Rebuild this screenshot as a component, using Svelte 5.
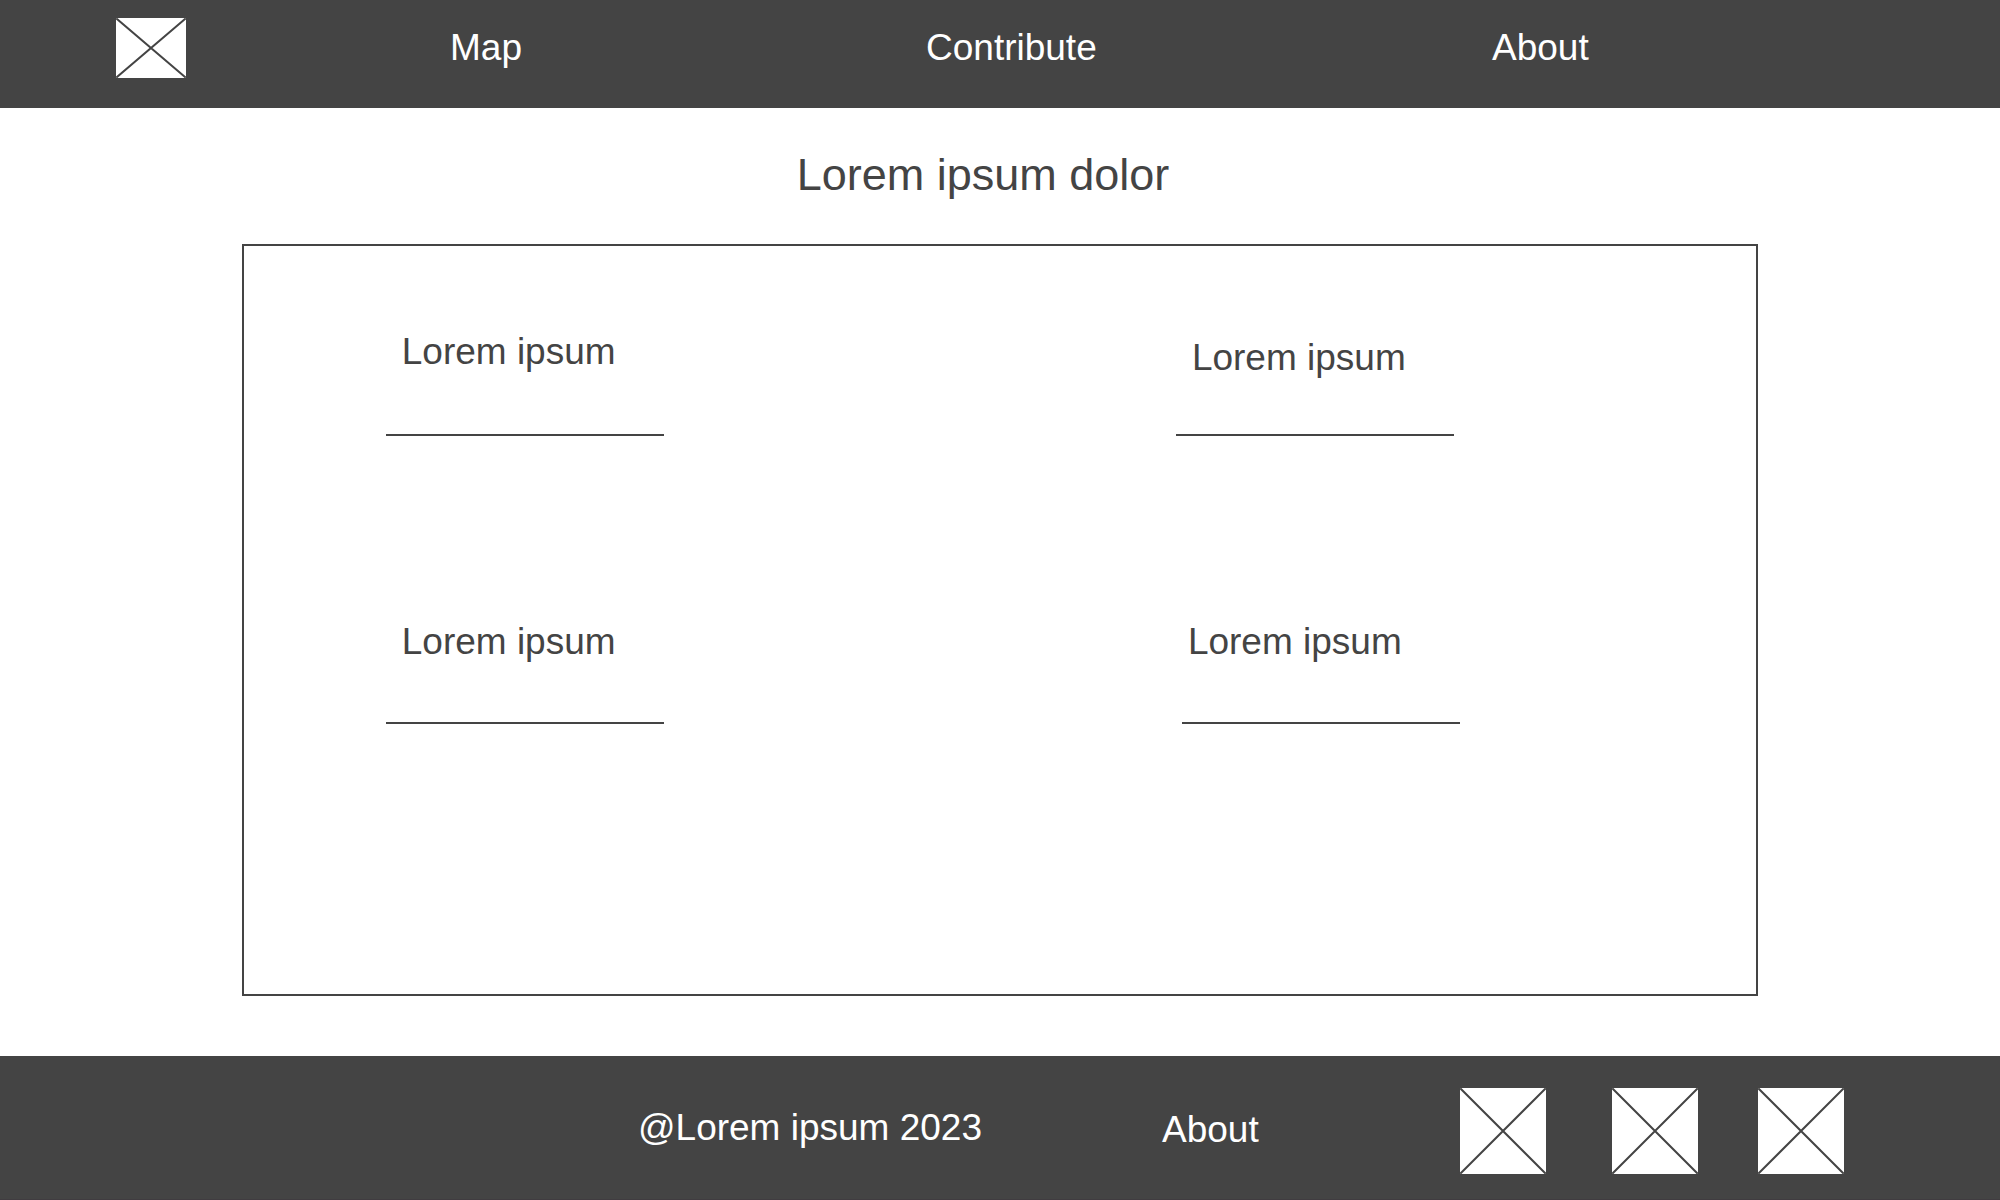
<script>
  const links = ['Map', 'Contribute', 'About'];
  const cards = [
    { title: 'Lorem ipsum', kind: 'tall' },
    { title: 'Lorem ipsum', kind: 'short' },
    { title: 'Lorem ipsum', kind: '' },
    { title: 'Lorem ipsum', kind: 'indented' }
  ];
  const socials = ['First profile', 'Second profile', 'Third profile'];
</script>

{#snippet placeholder(width, height)}
  <svg {width} {height} viewBox="0 0 {width} {height}" aria-hidden="true">
    <rect {width} {height} fill="#fff" />
    <path d="M1 1L{width - 1} {height - 1}M{width - 1} 1L1 {height - 1}" stroke="#444" stroke-width="2" stroke-linecap="square" />
  </svg>
{/snippet}

<div class="page">
  <header>
    <nav aria-label="Main">
      <a class="logo" href="#home" aria-label="Home">{@render placeholder(70, 60)}</a>
      {#each links as link}
        <a href="#{link.toLowerCase()}">{link}</a>
      {/each}
    </nav>
  </header>

  <main>
    <h1>Lorem ipsum dolor</h1>
    <section class="panel">
      {#each cards as card}
        <article class={card.kind}>
          <h2>{card.title}</h2>
        </article>
      {/each}
    </section>
  </main>

  <footer>
    <p>@Lorem ipsum 2023</p>
    <a class="about" href="#about">About</a>
    {#each socials as social}
      <a class="social" href="#social" aria-label={social}>{@render placeholder(86, 86)}</a>
    {/each}
  </footer>
</div>

<style>
  :global(body) {
    margin: 0;
    background: #fff;
  }

  .page {
    display: flex;
    flex-direction: column;
    min-height: 100vh;
    color: #444;
    font-family: 'Liberation Sans', Arial, sans-serif;
    font-size: 37px;
  }

  h1,
  h2,
  p {
    margin: 0;
    font-weight: 400;
  }

  a {
    color: inherit;
    text-decoration: none;
    justify-self: start;
  }

  svg {
    display: block;
  }

  header,
  footer {
    background: #444;
    color: #fff;
  }

  header {
    padding: 18px 0 30px;
  }

  nav {
    display: grid;
    grid-template-columns: 116fr 334fr 476fr 566fr 508fr;
    line-height: 60px;
  }

  .logo {
    grid-column: 2;
  }

  main {
    flex: 1;
    display: flex;
    flex-direction: column;
    padding: 40px 12.1% 60px;
  }

  h1 {
    margin-bottom: 42px;
    padding-right: 34px;
    font-size: 45px;
    line-height: 54px;
    text-align: center;
  }

  .panel {
    flex: 1;
    display: grid;
    grid-template-columns: 790fr 580fr;
    align-content: start;
    align-items: end;
    row-gap: 182px;
    padding: 82px 0 82px 9.35%;
    border: 2px solid #444;
  }

  article {
    box-sizing: border-box;
    width: 278px;
    padding: 0 0 56px 16px;
    border-bottom: 2px solid #444;
    line-height: 48px;
  }

  .tall {
    padding-bottom: 58px;
  }

  .short {
    padding-bottom: 52px;
  }

  .indented {
    margin-left: 6px;
    padding-left: 6px;
  }

  h2 {
    font-size: inherit;
  }

  footer {
    display: grid;
    grid-template-columns: 638fr 524fr 298fr 152fr 146fr 242fr;
    align-items: start;
    padding: 32px 0 25px;
    border-bottom: 1px solid #403c40;
  }

  p {
    grid-column: 2;
    line-height: 80px;
  }

  .about {
    line-height: 84px;
  }
</style>
